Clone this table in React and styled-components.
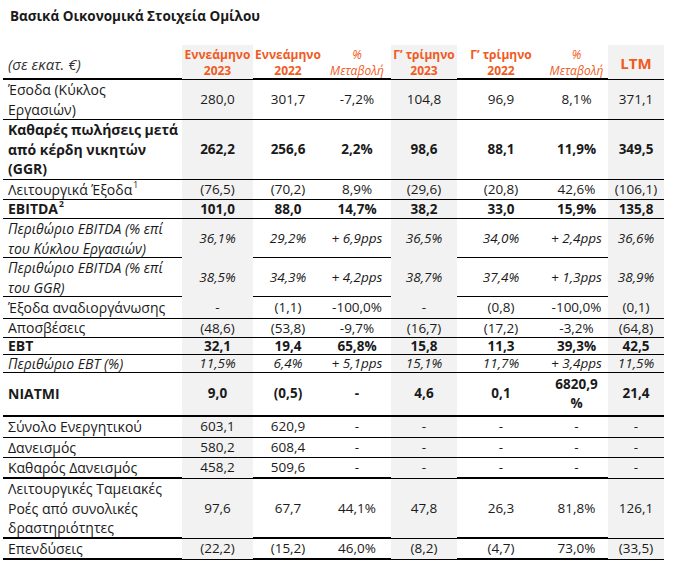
import React from "react";
import styled, { createGlobalStyle } from "styled-components";

const GlobalStyle = createGlobalStyle`
  body {
    margin: 0;
    background: #ffffff;
    font-family: "Open Sans", "DejaVu Sans", sans-serif;
    color: #1a1a1a;
  }
`;

const COLS = "179px 71px 70px 68px 66px 88px 63px 56px";
const SHADED = [1, 4, 7];

const Page = styled.div`
  width: 678px;
  height: 577px;
  padding: 7px 0 0 3px;
  box-sizing: border-box;
`;

const Title = styled.h1`
  margin: 0 0 0 7px;
  font-size: 13.5px;
  font-weight: 700;
  line-height: 18px;
  height: 38px;
`;

const Table = styled.div`
  width: 661px;
`;

const Row = styled.div`
  display: grid;
  grid-template-columns: ${COLS};
  height: ${(p) => p.$h}px;
  box-sizing: border-box;
  border-bottom: ${(p) => (p.$thick ? 2 : 1)}px solid #000;
  font-weight: ${(p) => (p.$bold ? 700 : 400)};
  font-style: ${(p) => (p.$italic ? "italic" : "normal")};
  font-size: 13.5px;
  line-height: ${(p) => Math.min(19.5, p.$h - 1)}px;
`;

const Label = styled.div`
  display: flex;
  align-items: center;
  padding-left: 5px;
  padding-right: 2px;
  white-space: nowrap;
  font-size: 14px;
`;

const Cell = styled.div`
  display: flex;
  align-items: center;
  justify-content: center;
  text-align: center;
  background: ${(p) => (p.$shaded ? "#f2f2f2" : "transparent")};
`;

const HeadRow = styled(Row)`
  line-height: 16px;
`;

const HeadLabel = styled(Label)`
  font-style: italic;
  font-weight: 400;
  font-size: 15px;
  color: #333;
  padding-top: 4px;
`;

const HeadCell = styled(Cell)`
  color: #f15a22;
  font-size: ${(p) => (p.$big ? 15 : 12)}px;
  font-weight: ${(p) => (p.$pct ? 400 : 700)};
  font-style: ${(p) => (p.$pct ? "italic" : "normal")};
  padding-top: 2px;
`;

const Sup = styled.span`
  font-size: 8.5px;
  line-height: 0;
  position: relative;
  top: -5px;
  margin-left: 1px;
`;

const heads = [
  ["Εννεάμηνο", "2023"],
  ["Εννεάμηνο", "2022"],
  ["%", "Μεταβολή", true],
  ["Γ’ τρίμηνο", "2023"],
  ["Γ’ τρίμηνο", "2022"],
  ["%", "Μεταβολή", true],
];

const rows = [
  { label: <>Έσοδα (Κύκλος<br />Εργασιών)</>, v: ["280,0", "301,7", "-7,2%", "104,8", "96,9", "8,1%", "371,1"], h: 40 },
  { label: <>Καθαρές πωλήσεις μετά<br />από κέρδη νικητών<br />(GGR)</>, v: ["262,2", "256,6", "2,2%", "98,6", "88,1", "11,9%", "349,5"], h: 60, bold: true },
  { label: <>Λειτουργικά Έξοδα<Sup>1</Sup></>, v: ["(76,5)", "(70,2)", "8,9%", "(29,6)", "(20,8)", "42,6%", "(106,1)"], h: 20 },
  { label: <>EBITDA<Sup>2</Sup></>, v: ["101,0", "88,0", "14,7%", "38,2", "33,0", "15,9%", "135,8"], h: 19, bold: true },
  { label: <>Περιθώριο EBITDA (% επί<br />του Κύκλου Εργασιών)</>, v: ["36,1%", "29,2%", "+ 6,9pps", "36,5%", "34,0%", "+ 2,4pps", "36,6%"], h: 39, italic: true },
  { label: <>Περιθώριο EBITDA (% επί<br />του GGR)</>, v: ["38,5%", "34,3%", "+ 4,2pps", "38,7%", "37,4%", "+ 1,3pps", "38,9%"], h: 39, italic: true },
  { label: "Έξοδα αναδιοργάνωσης", v: ["-", "(1,1)", "-100,0%", "-", "(0,8)", "-100,0%", "(0,1)"], h: 22 },
  { label: "Αποσβέσεις", v: ["(48,6)", "(53,8)", "-9,7%", "(16,7)", "(17,2)", "-3,2%", "(64,8)"], h: 19 },
  { label: "EBT", v: ["32,1", "19,4", "65,8%", "15,8", "11,3", "39,3%", "42,5"], h: 17, bold: true },
  { label: "Περιθώριο EBT (%)", v: ["11,5%", "6,4%", "+ 5,1pps", "15,1%", "11,7%", "+ 3,4pps", "11,5%"], h: 18, italic: true },
  { label: "NIATMI", v: ["9,0", "(0,5)", "-", "4,6", "0,1", <>6820,9<br />%</>, "21,4"], h: 44, bold: true, thick: true },
  { label: "Σύνολο Ενεργητικού", v: ["603,1", "620,9", "-", "-", "-", "-", "-"], h: 21 },
  { label: "Δανεισμός", v: ["580,2", "608,4", "-", "-", "-", "-", "-"], h: 20 },
  { label: "Καθαρός Δανεισμός", v: ["458,2", "509,6", "-", "-", "-", "-", "-"], h: 21, thick: true },
  { label: <>Λειτουργικές Ταμειακές<br />Ροές από συνολικές<br />δραστηριότητες</>, v: ["97,6", "67,7", "44,1%", "47,8", "26,3", "81,8%", "126,1"], h: 60, thick: true },
  { label: "Επενδύσεις", v: ["(22,2)", "(15,2)", "46,0%", "(8,2)", "(4,7)", "73,0%", "(33,5)"], h: 21, thick: true },
];

export default function App() {
  return (
    <Page>
      <GlobalStyle />
      <Title>Βασικά Οικονομικά Στοιχεία Ομίλου</Title>
      <Table>
        <HeadRow $h={35} $thick>
          <HeadLabel>(σε εκατ. €)</HeadLabel>
          {heads.map(([a, b, pct], i) => (
            <HeadCell key={i} $shaded={SHADED.includes(i + 1)} $pct={pct}>
              {a}
              <br />
              {b}
            </HeadCell>
          ))}
          <HeadCell $shaded $big>LTM</HeadCell>
        </HeadRow>
        {rows.map((r, i) => (
          <Row key={i} $h={r.h} $bold={r.bold} $italic={r.italic} $thick={r.thick}>
            <Label>{r.label}</Label>
            {r.v.map((v, j) => (
              <Cell key={j} $shaded={SHADED.includes(j + 1)}>
                {v}
              </Cell>
            ))}
          </Row>
        ))}
      </Table>
    </Page>
  );
}
